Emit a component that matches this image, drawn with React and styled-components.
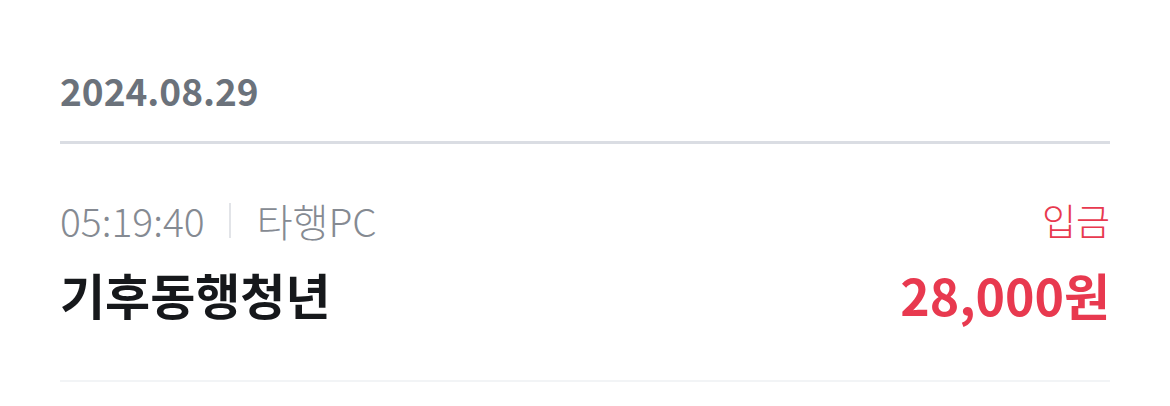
import React from 'react';
import styled, { createGlobalStyle } from 'styled-components';

const GlobalStyle = createGlobalStyle`
  html, body {
    margin: 0;
    padding: 0;
    background: #fff;
    font-family: "Noto Sans CJK KR", "Noto Sans", sans-serif;
  }
`;

const Wrapper = styled.div`
  padding: 0 60px;
`;

const DateHeader = styled.div`
  padding: 64px 0 25px;
  font-size: 37px;
  font-weight: 700;
  line-height: 52px;
  color: #6b727b;
  border-bottom: 3px solid #dadde3;
`;

const Row = styled.div`
  display: flex;
  justify-content: space-between;
  align-items: flex-end;
  padding: 54px 0 56px;
  border-bottom: 2px solid #f2f4f6;
`;

const Column = styled.div`
  display: flex;
  flex-direction: column;
  align-items: ${(p) => (p.right ? 'flex-end' : 'flex-start')};
  gap: 22px;
`;

const Meta = styled.div`
  display: flex;
  align-items: center;
  font-size: ${(p) => (p.red ? '37px' : '39px')};
  font-weight: 300;
  line-height: 44px;
  color: ${(p) => (p.red ? '#e8394f' : '#858a92')};
`;

const Divider = styled.span`
  width: 2px;
  height: 35px;
  background: #e2e4e8;
  margin: 0 26px 0 24px;
`;

const Name = styled.div`
  font-size: 49px;
  font-weight: 700;
  line-height: 60px;
  color: #16181b;
`;

const Amount = styled.div`
  font-size: 50px;
  font-weight: 700;
  line-height: 60px;
  color: #e8394f;
`;

const App = () => (
  <Wrapper>
    <GlobalStyle />
    <DateHeader>2024.08.29</DateHeader>
    <Row>
      <Column>
        <Meta>
          05:19:40
          <Divider />
          타행PC
        </Meta>
        <Name>기후동행청년</Name>
      </Column>
      <Column right>
        <Meta red>입금</Meta>
        <Amount>28,000원</Amount>
      </Column>
    </Row>
  </Wrapper>
);

export default App;
